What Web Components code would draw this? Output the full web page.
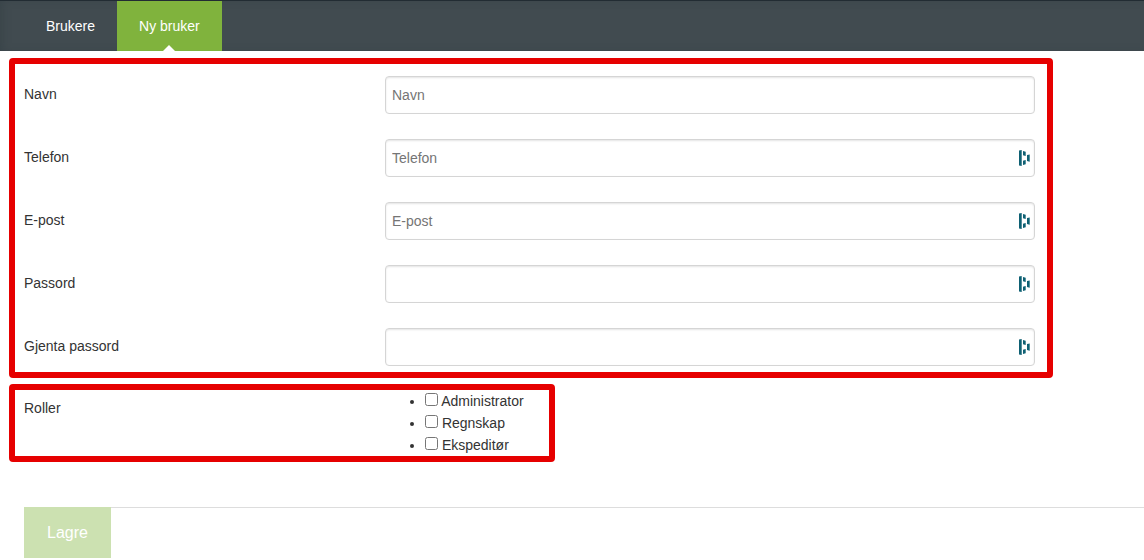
<!DOCTYPE html>
<html lang="nb">
<head>
<meta charset="utf-8">
<meta name="viewport" content="width=device-width, initial-scale=1">
<title>Ny bruker</title>
<style>
  body {
    margin: 0;
    background: #fff;
    color: #333;
    font: 14px/22px "Liberation Sans", Helvetica, Arial, sans-serif;
    --label-width: 361px;
    --green: #80b33d;
  }
  ul {
    margin: 0;
    padding-left: 40px;
  }
</style>
</head>
<body>
<tab-bar>
  <tab-link href="#brukere">Brukere</tab-link>
  <tab-link href="#ny-bruker" active>Ny bruker</tab-link>
</tab-bar>
<user-form>
  <form-frame>
    <text-field label="Navn" placeholder="Navn"></text-field>
    <text-field label="Telefon" type="tel" placeholder="Telefon" autofill></text-field>
    <text-field label="E-post" type="email" placeholder="E-post" autofill></text-field>
    <text-field label="Passord" type="password" autofill></text-field>
    <text-field label="Gjenta passord" type="password" autofill></text-field>
  </form-frame>
  <form-frame compact>
    <role-group label="Roller">
      <ul>
        <li><check-option>Administrator</check-option></li>
        <li><check-option>Regnskap</check-option></li>
        <li><check-option>Ekspeditør</check-option></li>
      </ul>
    </role-group>
  </form-frame>
  <save-button slot="actions" disabled>Lagre</save-button>
</user-form>

<script>
class TabBar extends HTMLElement {
  constructor() {
    super();
    this.attachShadow({ mode: 'open' }).innerHTML = `
      <style>
        :host { display: block; }
        nav {
          display: flex;
          box-sizing: border-box;
          height: 51px;
          padding-left: 24px;
          border-top: 1px solid #222c33;
          background: #414b50;
          box-shadow: inset 4px 0 8px -2px #394449;
        }
      </style>
      <nav><slot></slot></nav>
    `;
  }
}

class TabLink extends HTMLElement {
  connectedCallback() {
    const active = this.hasAttribute('active');
    this.attachShadow({ mode: 'open' }).innerHTML = `
      <style>
        :host { display: flex; }
        a {
          position: relative;
          padding: 0 22px;
          color: #fff;
          line-height: 50px;
          text-decoration: none;
        }
        :host([active]) a { background: var(--green); }
        :host([active]) a::after {
          content: "";
          position: absolute;
          bottom: 0;
          left: 50%;
          margin-left: -6px;
          border: solid transparent;
          border-width: 0 6px 6px;
          border-bottom-color: #fff;
        }
      </style>
      <a href="${this.getAttribute('href')}" ${active ? 'aria-current="page"' : ''}><slot></slot></a>
    `;
  }
}

class UserForm extends HTMLElement {
  constructor() {
    super();
    this.attachShadow({ mode: 'open' }).innerHTML = `
      <style>
        :host { display: block; }
        form {
          display: flex;
          flex-direction: column;
          gap: 6px;
          padding-top: 7px;
        }
        footer {
          display: flex;
          margin: 39px 0 0 24px;
          border-top: 1px solid #ddd;
        }
      </style>
      <form>
        <slot></slot>
        <footer><slot name="actions"></slot></footer>
      </form>
    `;
  }
}

class FormFrame extends HTMLElement {
  constructor() {
    super();
    this.attachShadow({ mode: 'open' }).innerHTML = `
      <style>
        :host {
          display: flex;
          flex-direction: column;
          gap: 25px;
          margin: 0 91px 0 9px;
          padding: 12px 12px 6px 9px;
          border: 6px solid #e60000;
          border-radius: 4px;
        }
        :host([compact]) {
          align-self: flex-start;
          margin-right: 0;
          padding: 0 25px 0 9px;
        }
      </style>
      <slot></slot>
    `;
  }
}

class TextField extends HTMLElement {
  connectedCallback() {
    const type = this.getAttribute('type') || 'text';
    const placeholder = this.getAttribute('placeholder') || '';
    const icon = `
      <svg viewBox="0 0 12 16" width="12" height="16" aria-hidden="true">
        <path fill="#0e6073" d="M1 .5L3.700 0v16L1 15.500zM5 1l2.700.8V6L5 5.200zM5 10.800l2.700-.8v4.200L5 15zM9 5l2.700-.6v7.400L9 11z"/>
      </svg>`;
    this.attachShadow({ mode: 'open' }).innerHTML = `
      <style>
        :host {
          display: grid;
          grid-template-columns: var(--label-width) 1fr;
        }
        label { line-height: 36px; }
        .control {
          display: grid;
          align-items: center;
        }
        input, svg { grid-area: 1 / 1; }
        input {
          box-sizing: border-box;
          width: 100%;
          height: 38px;
          margin: 0;
          padding: 0 6px;
          border: 1px solid #d5d5d5;
          border-radius: 4px;
          background: #fff;
          box-shadow: inset 0 1px 2px #e4e4e4;
          color: inherit;
          font: inherit;
        }
        input::placeholder { color: #757575; }
        svg {
          justify-self: end;
          margin-right: 5px;
          pointer-events: none;
          z-index: 1;
        }
      </style>
      <label for="input">${this.getAttribute('label')}</label>
      <div class="control">
        <input id="input" type="${type}" placeholder="${placeholder}">
        ${this.hasAttribute('autofill') ? icon : ''}
      </div>
    `;
  }
}

class RoleGroup extends HTMLElement {
  connectedCallback() {
    this.attachShadow({ mode: 'open' }).innerHTML = `
      <style>
        :host { display: block; }
        .group {
          display: grid;
          grid-template-columns: var(--label-width) auto;
        }
        #label { line-height: 36px; }
      </style>
      <div class="group" role="group" aria-labelledby="label">
        <span id="label">${this.getAttribute('label')}</span>
        <slot></slot>
      </div>
    `;
  }
}

class CheckOption extends HTMLElement {
  constructor() {
    super();
    this.attachShadow({ mode: 'open' }).innerHTML = `
      <style>
        :host { display: inline; }
        input {
          width: 13px;
          height: 13px;
          margin: 0;
        }
      </style>
      <label><input type="checkbox"> <slot></slot></label>
    `;
  }
}

class SaveButton extends HTMLElement {
  connectedCallback() {
    this.attachShadow({ mode: 'open' }).innerHTML = `
      <style>
        :host { display: block; margin-top: -1px; }
        button {
          padding: 0 23px;
          border: 0;
          background: var(--green);
          color: #fff;
          font: inherit;
          font-size: 16px;
          line-height: 51px;
          cursor: pointer;
        }
        button:disabled {
          background: #cce1b1;
          cursor: default;
        }
      </style>
      <button type="submit" ${this.hasAttribute('disabled') ? 'disabled' : ''}><slot></slot></button>
    `;
  }
}

customElements.define('tab-bar', TabBar);
customElements.define('tab-link', TabLink);
customElements.define('user-form', UserForm);
customElements.define('form-frame', FormFrame);
customElements.define('text-field', TextField);
customElements.define('role-group', RoleGroup);
customElements.define('check-option', CheckOption);
customElements.define('save-button', SaveButton);
</script>
</body>
</html>
